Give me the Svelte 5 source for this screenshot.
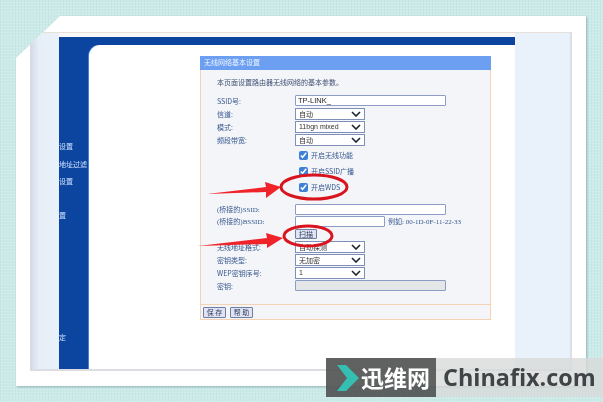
<script>
  const menu = [
    { text: "设置", gap: 96 },
    { text: "地址过滤", gap: 8 },
    { text: "设置", gap: 7 },
    { text: "置", gap: 24 },
    { text: "定", gap: 112 }
  ];
  const upper = [
    { label: "信道:", value: "自动" },
    { label: "模式:", value: "11bgn mixed" },
    { label: "频段带宽:", value: "自动" }
  ];
  const lower = [
    { label: "无线地址格式:", value: "自动探测" },
    { label: "密钥类型:", value: "无加密" },
    { label: "WEP密钥序号:", value: "1" }
  ];
  const checks = ["开启无线功能", "开启SSID广播", "开启WDS"];
</script>

{#snippet dropdown(item)}
  <div class="row">
    <label>{item.label}</label>
    <div class="select">
      <span>{item.value}</span>
      <svg width="10" height="6" viewBox="0 0 10 6">
        <path d="M1 1 5 5 9 1" fill="none" stroke="#1c2430" stroke-width="1.6" />
      </svg>
    </div>
  </div>
{/snippet}

<div class="page">
  <div class="shadow">
    <div class="frame">
      <div class="screen">
        <div class="gutter"></div>
        <div class="main">
          <div class="topbar"></div>
          <div class="columns">
            <nav class="sidebar">
              {#each menu as item}
                <div style="margin-top: {item.gap}px">{item.text}</div>
              {/each}
            </nav>
            <div class="content">
              <section class="panel">
                <header>无线网络基本设置</header>
                <div class="body">
                  <p class="intro">本页面设置路由器无线网络的基本参数。</p>
                  <div class="row first">
                    <label>SSID号:</label>
                    <input class="wide" value="TP-LINK_" />
                  </div>
                  {#each upper as item}
                    {@render dropdown(item)}
                  {/each}
                  <div class="checks">
                    {#each checks as text}
                      <label class="check"><input type="checkbox" checked />{text}</label>
                    {/each}
                  </div>
                  <div class="bridge">
                    <div class="row serif">
                      <label>(桥接的)SSID:</label>
                      <input class="wide" />
                    </div>
                    <div class="row serif">
                      <label>(桥接的)BSSID:</label>
                      <input class="mid" />
                      <span class="hint">例如: 00-1D-0F-11-22-33</span>
                    </div>
                    <div class="row">
                      <label></label>
                      <button class="scan">扫描</button>
                    </div>
                    {#each lower as item}
                      {@render dropdown(item)}
                    {/each}
                    <div class="row">
                      <label>密钥:</label>
                      <input class="wide off" disabled />
                    </div>
                  </div>
                </div>
                <footer>
                  <button>保 存</button>
                  <button>帮 助</button>
                </footer>
              </section>
            </div>
          </div>
        </div>
        <div class="aside"></div>
      </div>
    </div>
  </div>

  <svg class="marks" width="603" height="402" viewBox="0 0 603 402">
    <polygon points="207,194 266,187 265,182 281,187 266,198 266,192" fill="#f0232b" />
    <polygon points="198,246 267,238 266,233 283,238 267,248 267,244" fill="#f0232b" />
    <ellipse cx="314" cy="187" rx="33" ry="12" fill="none" stroke="#d8141e" stroke-width="3" />
    <ellipse cx="308" cy="236" rx="24" ry="10" fill="none" stroke="#d8141e" stroke-width="3" />
  </svg>

  <div class="logo">
    <div class="logo-dark">
      <svg width="22" height="26" viewBox="0 0 22 26">
        <path d="M0 0H9L22 13 9 26H0L10 13Z" fill="#35bfb3" />
      </svg>
      <span>迅维网</span>
    </div>
    <div class="logo-light">Chinafix.com</div>
  </div>
</div>

<style>
  :global(body) {
    margin: 0;
    background: #c9e9e7;
  }
  .page {
    position: relative;
    width: 603px;
    height: 402px;
    overflow: hidden;
    box-sizing: border-box;
    padding: 16px 17px 16px 16px;
    font-family: "Noto Sans CJK SC", "Liberation Sans", sans-serif;
    background-color: #cbeae8;
    background-image:
      repeating-linear-gradient(0deg, rgba(255, 255, 255, 0.14) 0 1px, transparent 1px 3px),
      repeating-linear-gradient(90deg, rgba(120, 190, 185, 0.1) 0 1px, transparent 1px 3px);
  }
  .shadow {
    height: 100%;
    filter: drop-shadow(1px 1px 1px rgba(90, 130, 125, 0.55));
  }
  .frame {
    height: 100%;
    box-sizing: border-box;
    padding: 16px 14px 15px 14px;
    background: #fff;
    clip-path: polygon(44px 0, 100% 0, 100% 100%, 0 100%, 0 42px);
  }
  .screen {
    display: flex;
    height: 100%;
    background: #fbf9f7;
    border-top: 1px solid #e6dfda;
    border-bottom: 2px solid #dcdde2;
    box-sizing: border-box;
  }
  .gutter {
    width: 29px;
    background: linear-gradient(90deg, #d3d7e6, #e6eef8 30%, #e9f2fa);
  }
  .main {
    width: 456px;
    margin-top: 4px;
    display: flex;
    flex-direction: column;
    background: #0b459f;
  }
  .topbar {
    height: 8px;
  }
  .columns {
    flex: 1;
    display: flex;
    min-height: 0;
  }
  .sidebar {
    width: 30px;
    color: #cfe0ff;
    font-size: 7px;
    line-height: 10px;
    white-space: nowrap;
    filter: blur(0.3px);
  }
  .content {
    flex: 1;
    background: #fff;
    border-top-left-radius: 11px;
    padding: 11px 0 0 111px;
    box-shadow: -1px 0 0 #3f7fe0;
  }
  .panel {
    width: 291px;
    background: #f4f5f9;
    border: 1px solid #f5d2b4;
    border-top: 0;
    box-sizing: border-box;
    color: #37598f;
    font-size: 7px;
    filter: blur(0.3px);
  }
  .panel header {
    height: 14px;
    margin: 0 -1px;
    padding-left: 4px;
    background: #6c9ff2;
    color: #eef4ff;
    line-height: 13px;
  }
  .body {
    height: 235px;
    box-sizing: border-box;
    padding: 6px 0 0 16px;
    border-bottom: 1px solid #f5d2b4;
  }
  .intro {
    margin: 0;
    line-height: 12px;
    color: #3d4f72;
  }
  .row {
    display: flex;
    align-items: center;
    height: 13px;
  }
  .row.first {
    margin-top: 6px;
  }
  .row label {
    width: 78px;
    flex: none;
    margin: 0;
  }
  .row input {
    height: 11px;
    box-sizing: border-box;
    margin: 0;
    padding: 0 2px;
    border: 1px solid #8d9cc4;
    border-radius: 1px;
    background: #fff;
    font: 7.5px/9px "Liberation Sans", sans-serif;
    color: #222;
  }
  .wide {
    width: 151px;
  }
  .mid {
    width: 90px;
  }
  .off {
    background: #e4e6e8 !important;
  }
  .select {
    width: 70px;
    height: 12px;
    box-sizing: border-box;
    display: flex;
    align-items: center;
    justify-content: space-between;
    padding: 0 3px;
    background: #fff;
    border: 1px solid #7f8fb8;
    color: #333;
    font-family: "Liberation Sans", "Noto Sans CJK SC", sans-serif;
  }
  .checks {
    display: flex;
    flex-direction: column;
    gap: 6px;
    margin: 4px 0 0 82px;
  }
  .check {
    display: flex;
    align-items: center;
    gap: 3px;
    height: 10px;
    line-height: 10px;
  }
  .check input {
    width: 9px;
    height: 9px;
    margin: 0;
    accent-color: #3f7fd6;
  }
  .bridge {
    margin-top: 11px;
  }
  .serif {
    height: 12px;
    font-family: "Liberation Serif", "Noto Sans CJK SC", serif;
  }
  .hint {
    margin-left: 3px;
  }
  button {
    height: 11px;
    padding: 0;
    border: 1px solid #6f7f9f;
    border-radius: 1px;
    background: #dfe3f5;
    color: #33405c;
    font: 7px "Noto Sans CJK SC", sans-serif;
    line-height: 9px;
  }
  .scan {
    width: 22px;
    height: 10px;
  }
  footer {
    display: flex;
    gap: 4px;
    height: 14px;
    padding: 2px 0 0 2px;
    box-sizing: border-box;
  }
  footer button {
    width: 23px;
  }
  .aside {
    flex: 1;
    background: #e9f2fb;
    box-shadow: inset -2px 0 1px #dcdfe4;
  }
  .marks {
    position: absolute;
    inset: 0;
  }
  .logo {
    position: absolute;
    left: 326px;
    top: 358px;
    right: 0;
    height: 39px;
    display: flex;
  }
  .logo-dark {
    width: 110px;
    display: flex;
    align-items: center;
    gap: 2px;
    box-sizing: border-box;
    padding-left: 11px;
    background: rgba(82, 84, 84, 0.92);
    color: #fff;
    font-size: 23px;
    font-weight: 700;
    line-height: 1;
  }
  .logo-light {
    flex: 1;
    padding-left: 7px;
    background: rgba(216, 218, 217, 0.8);
    color: #3f4447;
    font: 700 23.4px/39px "Open Sans", sans-serif;
    white-space: nowrap;
  }
</style>
